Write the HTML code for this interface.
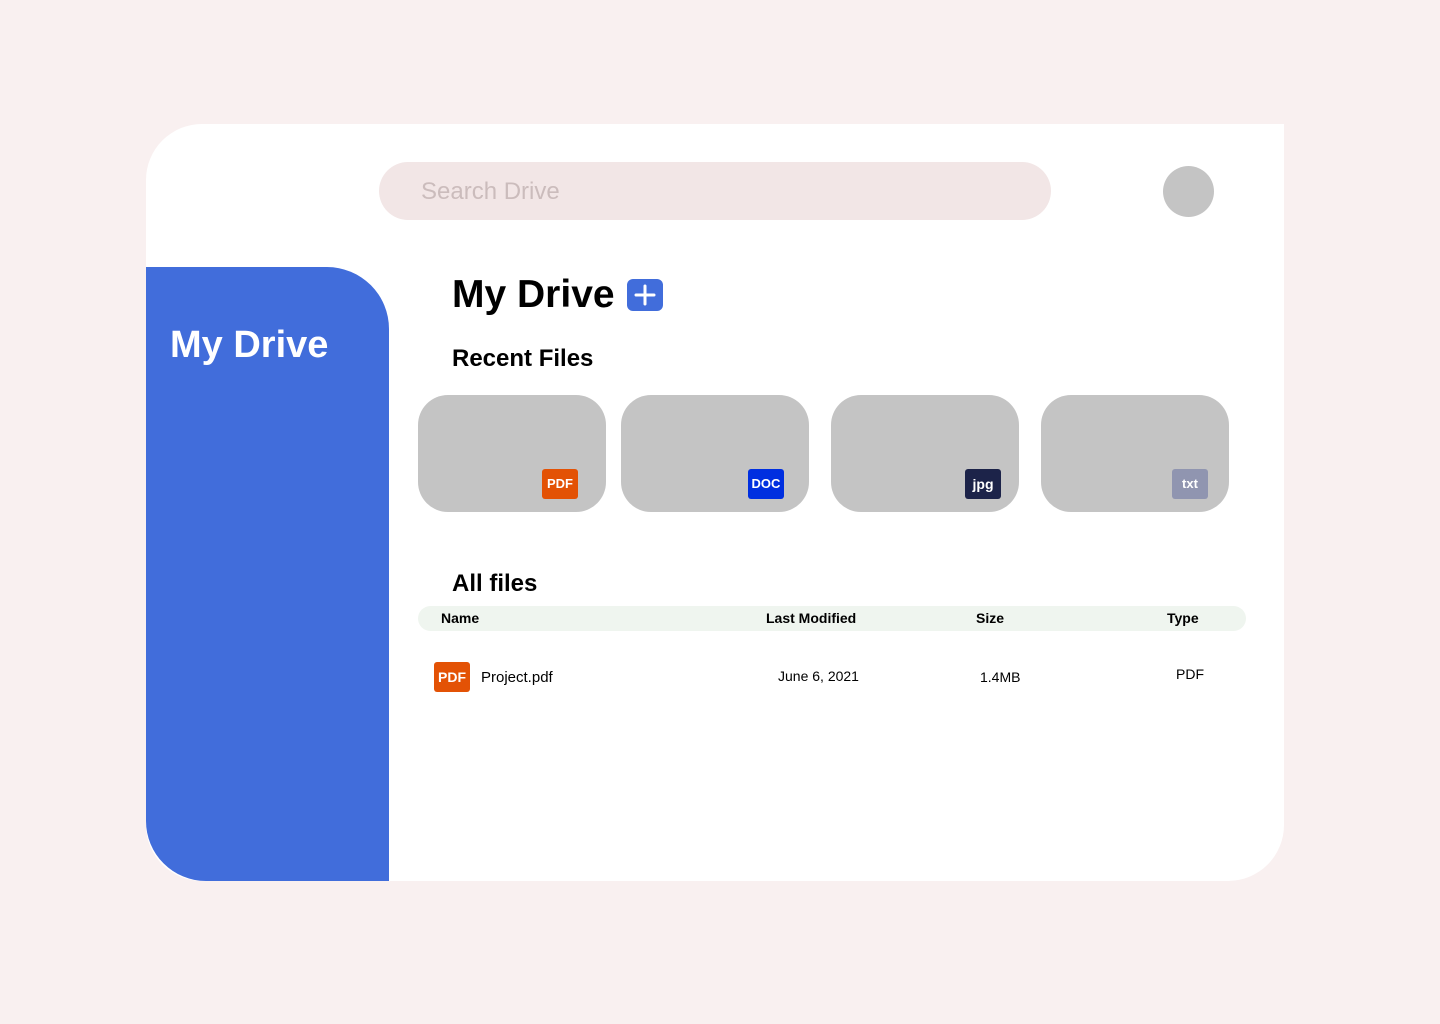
<!DOCTYPE html>
<html><head><meta charset="utf-8"><style>
*{margin:0;padding:0;box-sizing:border-box}
body{width:1440px;height:1024px;background:#f9f0f0;position:relative;overflow:hidden;font-family:"Liberation Sans",sans-serif;color:#000}
.card{position:absolute;left:146px;top:124px;width:1138px;height:757px;background:#fff;border-radius:56px 0 56px 56px}
.side{position:absolute;left:146px;top:267px;width:243px;height:614px;background:#416ddb;border-radius:0 62px 0 60px}
.side h1{position:absolute;left:24px;top:57px;color:#fff;font-size:38px;font-weight:bold;letter-spacing:0}
.a{position:absolute}
.search{left:379px;top:162px;width:672px;height:58px;background:#f2e6e6;border-radius:29px;color:#cbbcbc;font-size:24px;padding-left:42px;line-height:60px}
.av{left:1163px;top:166px;width:51px;height:51px;border-radius:50%;background:#c4c4c4}
.tile{top:395px;width:188px;height:117px;background:#c4c4c4;border-radius:30px}
.b{position:absolute;width:36px;height:30px;border-radius:3px;color:#fff;font-weight:bold;font-size:13px;text-align:center;line-height:30px}
.th{left:418px;top:606px;width:828px;height:25px;background:#eff5ef;border-radius:13px;font-size:14px;font-weight:bold}
.th span{position:absolute;top:4px}
.row{font-size:14px;position:absolute}
</style></head><body>
<div class="card"></div>
<div class="side"><h1>My Drive</h1></div>
<div class="a search">Search Drive</div>
<div class="a av"></div>
<div class="a" style="left:452px;top:273px;font-size:39px;font-weight:bold;letter-spacing:0">My Drive</div>
<div class="a" style="left:627px;top:279px;width:36px;height:32px;background:#416ddb;border-radius:6px">
<svg width="36" height="32"><path d="M18 7V25M9 16H27" stroke="#fff" stroke-width="3" stroke-linecap="round"/></svg></div>
<div class="a" style="left:452px;top:345px;font-size:24px;font-weight:bold">Recent Files</div>
<div class="a tile" style="left:418px"><div class="b" style="left:124px;top:74px;background:#e35205">PDF</div></div>
<div class="a tile" style="left:621px"><div class="b" style="left:127px;top:74px;background:#002fe0">DOC</div></div>
<div class="a tile" style="left:831px"><div class="b" style="left:134px;top:74px;background:#1c2349;font-size:14px">jpg</div></div>
<div class="a tile" style="left:1041px"><div class="b" style="left:131px;top:74px;background:#9095b0">txt</div></div>
<div class="a" style="left:452px;top:570px;font-size:24px;font-weight:bold">All files</div>
<div class="a th"><span style="left:23px">Name</span><span style="left:348px">Last Modified</span><span style="left:558px">Size</span><span style="left:749px">Type</span></div>
<div class="b" style="left:434px;top:662px;background:#e35205;height:30px;font-size:14px">PDF</div>
<div class="row" style="left:481px;top:669px;font-size:15px">Project.pdf</div>
<div class="row" style="left:778px;top:668px">June 6, 2021</div>
<div class="row" style="left:980px;top:669px">1.4MB</div>
<div class="row" style="left:1176px;top:666px">PDF</div>
</body></html>
